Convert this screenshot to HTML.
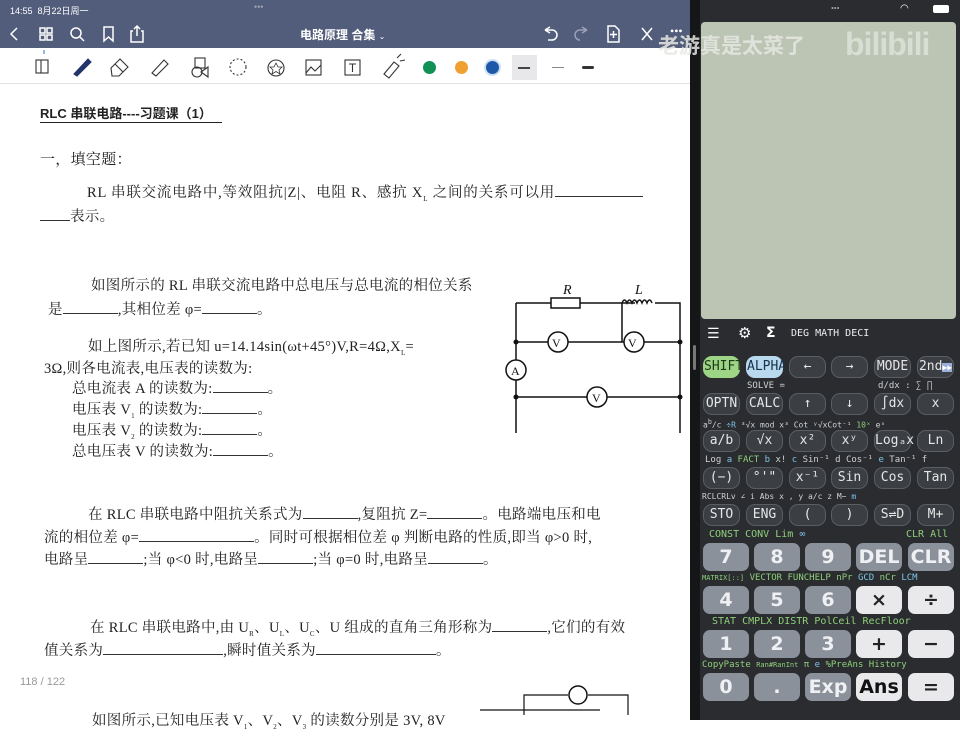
<!DOCTYPE html>
<html><head><meta charset="utf-8"><style>
*{margin:0;padding:0;box-sizing:border-box}
body{width:960px;height:720px;overflow:hidden;position:relative;background:#fff;font-family:"Liberation Serif","Noto Serif CJK SC",serif}
.a{position:absolute;white-space:nowrap}
.hdr{position:absolute;left:0;top:0;width:690px;height:48px;background:#525c7b;color:#fff}
.tb{position:absolute;left:0;top:48px;width:690px;height:36px;background:#fff;border-bottom:1px solid #e3e3e3}
.t{font-size:14.5px;letter-spacing:.3px;color:#222;font-family:"Liberation Serif","Noto Serif CJK SC",serif}
.u{display:inline-block;border-bottom:1px solid #333;height:12px;vertical-align:baseline}
.calc{position:absolute;left:700px;top:0;width:260px;height:720px;background:#2a2c30}
.k{position:absolute;height:22px;width:37px;border-radius:9px;background:#3b3e43;border:1px solid #5a5d62;color:#e6e6e6;font-family:"DejaVu Sans Mono",monospace;font-size:13px;text-align:center;line-height:20px}
.n{position:absolute;height:28px;width:46px;border-radius:7px;background:#8b919a;color:#eef0f3;font-family:"DejaVu Sans",sans-serif;font-weight:bold;font-size:19px;text-align:center;line-height:28px}
.w{background:#e9e9eb;color:#222}
.l{position:absolute;font-family:"DejaVu Sans Mono",monospace;font-size:9px;color:#cfd2d4;white-space:nowrap}
.g{color:#8fd07a}.b{color:#7fc4e8}
</style></head><body>

<div class="hdr">
<div class="a" style="left:10px;top:4px;font-size:9px;font-family:'Liberation Sans','Noto Sans CJK SC',sans-serif">14:55&nbsp; 8月22日周一</div>
<div class="a" style="left:254px;top:2px;font-size:9px;color:#aab">•••</div>
<svg class="a" style="left:0;top:22px" width="690" height="26" fill="none" stroke="#fff" stroke-width="1.5">
<path d="M17 6 L11 12 L17 18"/>
<rect x="40" y="6" width="5" height="5"/><rect x="47" y="6" width="5" height="5"/><rect x="40" y="13" width="5" height="5"/><rect x="47" y="13" width="5" height="5"/>
<circle cx="76" cy="11" r="5"/><path d="M80 15 L84 19"/>
<path d="M104 5 H113 V19 L108.5 15 L104 19 Z"/>
<path d="M133 9 H131 V20 H143 V9 H141 M137 4 V14 M134 7 L137 4 L140 7"/>
<path d="M545 8 L550 5 M545 8 L550 11 M545 8 H552 A5 5 0 0 1 552 18 H548"/>
<path d="M587 8 L582 5 M587 8 L582 11 M587 8 H580 A5 5 0 0 0 580 18" stroke="#9aa0b5"/>
<path d="M608 4 H615 L619 8 V20 H608 Z M613.5 9 V16 M610 12.5 H617"/>
<path d="M642 6 L652 18 M652 6 L642 18"/>
</svg>
<div class="a" style="left:300px;top:26px;font-size:12px;font-family:'Liberation Sans','Noto Sans CJK SC',sans-serif;font-weight:bold">电路原理 合集 <span style="font-size:8px;font-weight:normal">⌄</span></div>
<div class="a" style="left:670px;top:24px;font-size:12px">•••</div>
</div>

<div class="tb">
<svg class="a" style="left:0;top:0" width="690" height="36" fill="none" stroke="#333" stroke-width="1.1">
<rect x="36" y="12" width="12" height="13"/><path d="M41 12 V25"/>
<path d="M44 6 V2" stroke="#3b7ee0"/>
<path d="M74 26 L88 11 L91 14 L77 28 Z" fill="#22346a" stroke="#22346a"/>
<path d="M111 20 L120 11 L128 19 L119 28 L112 28 Z M115 16 L123 24"/>
<path d="M152 25 L164 12 L168 16 L156 28 Z"/>
<rect x="195" y="10" width="10" height="10"/><circle cx="197" cy="24" r="5"/><path d="M201 24 L208 19 L208 29 Z"/>
<circle cx="238" cy="19" r="8" stroke-dasharray="2 2"/>
<circle cx="276" cy="20" r="8"/><path d="M276 15 L278 19 L282 19 L279 22 L280 26 L276 23.5 L272 26 L273 22 L270 19 L274 19 Z" stroke-width=".8"/>
<rect x="306" y="12" width="15" height="15"/><path d="M306 25 L311 19 L315 23 L321 17"/>
<rect x="345" y="12" width="15" height="15"/><path d="M349 16 H356 M352.5 16 V24"/>
<path d="M384 26 L394 14 L399 18 L389 30 Z M397 10 L401 6 M400 13 L405 12"/>
</svg>
<div class="a" style="left:423px;top:13px;width:13px;height:13px;border-radius:50%;background:#129156"></div>
<div class="a" style="left:455px;top:13px;width:13px;height:13px;border-radius:50%;background:#f0a030"></div>
<div class="a" style="left:484px;top:11px;width:17px;height:17px;border-radius:50%;background:#1c57a8;border:2px solid #cfe0f5"></div>
<div class="a" style="left:512px;top:7px;width:25px;height:25px;background:#e8e8ea"></div>
<div class="a" style="left:518px;top:19px;width:12px;height:1.5px;background:#444"></div>
<div class="a" style="left:552px;top:19px;width:12px;height:1px;background:#888"></div>
<div class="a" style="left:582px;top:18px;width:12px;height:3px;border-radius:2px;background:#333"></div>
</div>

<!-- document -->
<div class="a" style="left:40px;top:103px;font-size:13px;font-family:'Liberation Sans','Noto Sans CJK SC',sans-serif;font-weight:bold;color:#222;border-bottom:1px solid #222;padding-right:10px">RLC 串联电路----习题课（1）</div>
<div class="a t" style="left:40px;top:148px;font-size:15px">一，填空题：</div>
<div class="a t" style="left:87px;top:181px;letter-spacing:.8px">RL 串联交流电路中,等效阻抗|Z|、电阻 R、感抗 X<sub style="font-size:7px">L</sub> 之间的关系可以用<span class="u" style="width:88px"></span></div>
<div class="a t" style="left:40px;top:205px"><span class="u" style="width:30px"></span>表示。</div>
<div class="a t" style="left:91px;top:274px">如图所示的 RL 串联交流电路中总电压与总电流的相位关系</div>
<div class="a t" style="left:48px;top:298px">是<span class="u" style="width:55px"></span>,其相位差 φ=<span class="u" style="width:55px"></span>。</div>
<div class="a t" style="left:88px;top:335px">如上图所示,若已知 u=14.14sin(ωt+45°)V,R=4Ω,X<sub style="font-size:7px">L</sub>=</div>
<div class="a t" style="left:44px;top:357px">3Ω,则各电流表,电压表的读数为:</div>
<div class="a t" style="left:72px;top:377px">总电流表 A 的读数为:<span class="u" style="width:55px"></span>。</div>
<div class="a t" style="left:72px;top:398px">电压表 V<sub style="font-size:7px">1</sub> 的读数为:<span class="u" style="width:55px"></span>。</div>
<div class="a t" style="left:72px;top:419px">电压表 V<sub style="font-size:7px">2</sub> 的读数为:<span class="u" style="width:55px"></span>。</div>
<div class="a t" style="left:72px;top:440px">总电压表 V 的读数为:<span class="u" style="width:55px"></span>。</div>

<div class="a t" style="left:88px;top:503px">在 RLC 串联电路中阻抗关系式为<span class="u" style="width:55px"></span>,复阻抗 Z=<span class="u" style="width:55px"></span>。电路端电压和电</div>
<div class="a t" style="left:44px;top:526px">流的相位差 φ=<span class="u" style="width:115px"></span>。同时可根据相位差 φ 判断电路的性质,即当 φ&gt;0 时,</div>
<div class="a t" style="left:44px;top:548px">电路呈<span class="u" style="width:55px"></span>;当 φ&lt;0 时,电路呈<span class="u" style="width:55px"></span>;当 φ=0 时,电路呈<span class="u" style="width:55px"></span>。</div>
<div class="a t" style="left:90px;top:616px">在 RLC 串联电路中,由 U<sub style="font-size:7px">R</sub>、U<sub style="font-size:7px">L</sub>、U<sub style="font-size:7px">C</sub>、U 组成的直角三角形称为<span class="u" style="width:55px"></span>,它们的有效</div>
<div class="a t" style="left:44px;top:639px">值关系为<span class="u" style="width:120px"></span>,瞬时值关系为<span class="u" style="width:120px"></span>。</div>
<div class="a" style="left:20px;top:676px;font-size:11px;color:#999;font-family:'Liberation Sans',sans-serif">118 / 122</div>
<div class="a t" style="left:92px;top:709px">如图所示,已知电压表 V<sub style="font-size:7px">1</sub>、V<sub style="font-size:7px">2</sub>、V<sub style="font-size:7px">3</sub> 的读数分别是 3V, 8V</div>

<svg class="a" style="left:480px;top:270px" width="210" height="450" fill="none" stroke="#111" stroke-width="1.5" font-family="Liberation Serif" font-size="14">
<path d="M36 33 H71 M100 33 H142 V72 M142 33 H155 M175 33 H200 V163 M36 33 V163"/>
<rect x="71" y="28" width="29" height="10"/>
<path d="M142 33 q2.5 -6 5 0 q2.5 -6 5 0 q2.5 -6 5 0 q2.5 -6 5 0 q2.5 -6 5 0 q2.5 -6 5 0 "/>
<text x="83" y="24" font-style="italic" stroke="none" fill="#111">R</text>
<text x="155" y="24" font-style="italic" stroke="none" fill="#111">L</text>
<path d="M36 72 H68 M88 72 H144 M164 72 H200 M36 127 H107 M127 127 H200"/>
<circle cx="78" cy="72" r="10"/><circle cx="154" cy="72" r="10"/><circle cx="36" cy="100" r="10" fill="#fff"/><circle cx="117" cy="127" r="10"/>
<g stroke="none" fill="#111"><circle cx="36" cy="72" r="2.5"/><circle cx="200" cy="72" r="2.5"/><circle cx="36" cy="127" r="2.5"/><circle cx="200" cy="127" r="2.5"/>
<text x="72" y="77" font-size="12">V</text><text x="148" y="77" font-size="12">V</text><text x="31" y="105" font-size="12">A</text><text x="112" y="132" font-size="12">V</text></g>
<path d="M0 440 H120 M44 440 V445 M44 440 V425 H88 M108 425 H148 V445" stroke-width="1.2"/>
<circle cx="98" cy="425" r="9"/>
</svg>
<div class="a" style="left:690px;top:0;width:10px;height:720px;background:#151618"></div>
<div class="a" style="left:693px;top:345px;width:3px;height:25px;background:#777;border-radius:2px"></div>

<div class="calc">
<div class="a" style="left:131px;top:4px;font-size:8px;color:#aaa">•••</div>
<div class="a" style="left:233px;top:5px;width:16px;height:8px;background:#fff;border-radius:2px"></div>
<div class="a" style="left:200px;top:3px;color:#fff;font-size:10px;font-family:'DejaVu Sans'">◠</div>
<div class="a" style="left:1px;top:22px;width:255px;height:297px;background:#bcc4b4;border-radius:4px"></div>
<div class="a" style="left:-42px;top:30px;font-size:21px;color:#e6e8e2;font-weight:bold;font-family:'Liberation Sans','Noto Sans CJK SC',sans-serif;opacity:.85">老游真是太菜了</div>
<div class="a" style="left:145px;top:26px;font-size:32px;color:#dfe3db;font-weight:bold;font-family:'Liberation Sans',sans-serif;letter-spacing:-1px;opacity:.85">bilibili</div>
<div class="a" style="left:7px;top:326px;color:#fff;font-size:14px;font-family:'DejaVu Sans'">☰</div>
<div class="a" style="left:38px;top:324px;color:#fff;font-size:15px;font-family:'DejaVu Sans'">⚙</div>
<div class="a" style="left:66px;top:325px;color:#fff;font-size:14px;font-weight:bold;font-family:'DejaVu Sans'">Σ</div>
<div class="a" style="left:91px;top:328px;color:#eee;font-size:10px;font-family:'DejaVu Sans Mono'">DEG MATH DECI</div>

<div class="k" style="left:3px;top:356px;background:#9ed486;color:#1d3b17;border-color:#9ed486">SHIFT</div>
<div class="k" style="left:46px;top:356px;background:#b9d9ef;color:#17324a;border-color:#b9d9ef">ALPHA</div>
<div class="k" style="left:89px;top:356px">←</div>
<div class="k" style="left:131px;top:356px">→</div>
<div class="k" style="left:174px;top:356px">MODE</div>
<div class="k" style="left:217px;top:356px">2nd<span style="background:#9ab0d8;color:#fff;font-size:8px">▶▶</span></div>
<div class="l" style="left:47px;top:381px">SOLVE =</div><div class="l" style="left:178px;top:381px">d/dx :  ∑  ∏</div>
<div class="k" style="left:3px;top:393px">OPTN</div><div class="k" style="left:46px;top:393px">CALC</div><div class="k" style="left:89px;top:393px">↑</div><div class="k" style="left:131px;top:393px">↓</div><div class="k" style="left:174px;top:393px">∫dx</div><div class="k" style="left:217px;top:393px">x</div>
<div class="l" style="left:3px;top:418px;font-size:8px">a<sup>b</sup>/c <span class="b">÷R</span> ³√x mod x³ Cot ʸ√xCot⁻¹ <span class="g">10ˣ</span>    eˣ</div>
<div class="k" style="left:3px;top:430px">a/b</div><div class="k" style="left:46px;top:430px">√x</div><div class="k" style="left:89px;top:430px">x²</div><div class="k" style="left:131px;top:430px">xʸ</div><div class="k" style="left:174px;top:430px">Logₐx</div><div class="k" style="left:217px;top:430px">Ln</div>
<div class="l" style="left:5px;top:455px">Log <span class="b">a</span> <span class="g">FACT</span> <span class="b">b</span> x! <span class="b">c</span> Sin⁻¹ d Cos⁻¹ <span class="b">e</span> Tan⁻¹ f</div>
<div class="k" style="left:3px;top:467px">(−)</div><div class="k" style="left:46px;top:467px">°'"</div><div class="k" style="left:89px;top:467px">x⁻¹</div><div class="k" style="left:131px;top:467px">Sin</div><div class="k" style="left:174px;top:467px">Cos</div><div class="k" style="left:217px;top:467px">Tan</div>
<div class="l" style="left:2px;top:492px;font-size:8px">RCLCRLv  ∠  i   Abs  x   ,   y   a/c  z  M−  <span class="b">m</span></div>
<div class="k" style="left:3px;top:504px">STO</div><div class="k" style="left:46px;top:504px">ENG</div><div class="k" style="left:89px;top:504px">(</div><div class="k" style="left:131px;top:504px">)</div><div class="k" style="left:174px;top:504px">S⇌D</div><div class="k" style="left:217px;top:504px">M+</div>
<div class="l g" style="left:9px;top:529px;font-size:10px">CONST    CONV    Lim <span class="b">∞</span>          </div><div class="l g" style="left:206px;top:529px;font-size:10px">CLR All</div>
<div class="n" style="left:3px;top:543px">7</div><div class="n" style="left:54px;top:543px">8</div><div class="n" style="left:105px;top:543px">9</div><div class="n" style="left:156px;top:543px">DEL</div><div class="n" style="left:208px;top:543px">CLR</div>
<div class="l g" style="left:2px;top:573px;font-size:9px"><span style="font-size:7px">MATRIX[::]</span> VECTOR FUNCHELP nPr <span class="b">GCD</span> nCr <span class="b">LCM</span></div>
<div class="n" style="left:3px;top:586px">4</div><div class="n" style="left:54px;top:586px">5</div><div class="n" style="left:105px;top:586px">6</div><div class="n w" style="left:156px;top:586px">×</div><div class="n w" style="left:208px;top:586px">÷</div>
<div class="l g" style="left:12px;top:616px;font-size:10px">STAT    CMPLX    DISTR   PolCeil RecFloor</div>
<div class="n" style="left:3px;top:630px">1</div><div class="n" style="left:54px;top:630px">2</div><div class="n" style="left:105px;top:630px">3</div><div class="n w" style="left:156px;top:630px">+</div><div class="n w" style="left:208px;top:630px">−</div>
<div class="l g" style="left:2px;top:660px;font-size:9px">CopyPaste <span style="font-size:7px">Ran#RanInt</span>  π   <span class="b">e</span> %PreAns History</div>
<div class="n" style="left:3px;top:673px">0</div><div class="n" style="left:54px;top:673px">.</div><div class="n" style="left:105px;top:673px">Exp</div><div class="n w" style="left:156px;top:673px;color:#111">Ans</div><div class="n w" style="left:208px;top:673px">=</div>
</div>
</body></html>
